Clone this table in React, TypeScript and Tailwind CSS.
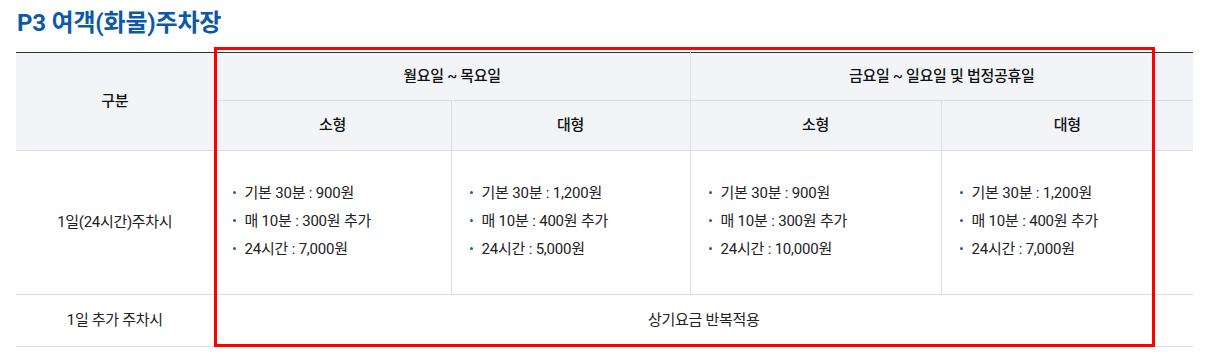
import React from 'react';

type Fee = { base: string; per10: string; day: string };

const fees: Fee[] = [
  { base: '900원', per10: '300원', day: '7,000원' },
  { base: '1,200원', per10: '400원', day: '5,000원' },
  { base: '900원', per10: '300원', day: '10,000원' },
  { base: '1,200원', per10: '400원', day: '7,000원' },
];

function FeeList({ fee }: { fee: Fee }) {
  const items = [`기본 30분 : ${fee.base}`, `매 10분 : ${fee.per10} 추가`, `24시간 : ${fee.day}`];
  return (
    <ul className="flex flex-col gap-[8px]">
      {items.map((t) => (
        <li key={t} className="flex items-center gap-[9px] leading-[20px] tracking-[-0.2px]">
          <span className="h-[3px] w-[3px] rounded-full bg-[#1a5fa8]" />
          <span>{t}</span>
        </li>
      ))}
    </ul>
  );
}

export default function App() {
  const th = 'border-b border-[#dcdde2] bg-[#f3f4f8] font-medium text-[15px] text-[#111] tracking-[-0.3px]';
  return (
    <div
      className="w-[1209px] h-[359px] bg-white px-[16px] pt-[7px] text-[#222]"
      style={{ fontFamily: 'Roboto, "Noto Sans CJK KR", sans-serif' }}
    >
      <h2 className="pl-[1px] text-[24px] font-bold leading-[32px] text-[#0c5aa3] tracking-[-0.2px]">
        P3 여객(화물)주차장
      </h2>

      <div className="relative mt-[13px] w-[1177px]">
        <table className="w-full table-fixed border-collapse border-t border-[#333] text-[15px]">
          <colgroup>
            <col className="w-[198px]" />
            <col className="w-[237px]" />
            <col className="w-[239px]" />
            <col className="w-[251px]" />
            <col className="w-[252px]" />
          </colgroup>
          <thead>
            <tr className="h-[48px]">
              <th rowSpan={2} className={th + ' border-r'}>
                구분
              </th>
              <th colSpan={2} className={th + ' border-r'}>
                월요일 ~ 목요일
              </th>
              <th colSpan={2} className={th}>
                금요일 ~ 일요일 및 법정공휴일
              </th>
            </tr>
            <tr className="h-[50px]">
              <th className={th + ' border-r'}>소형</th>
              <th className={th + ' border-r'}>대형</th>
              <th className={th + ' border-r'}>소형</th>
              <th className={th}>대형</th>
            </tr>
          </thead>
          <tbody>
            <tr className="h-[144px] border-b border-[#dcdde2]">
              <td className="border-r border-[#dcdde2] text-center tracking-[-0.3px]">1일(24시간)주차시</td>
              {fees.map((f, i) => (
                <td
                  key={i}
                  className={'pl-[18px] align-middle ' + (i < 3 ? 'border-r border-[#dcdde2]' : '')}
                >
                  <div className="-mt-[4px]">
                    <FeeList fee={f} />
                  </div>
                </td>
              ))}
            </tr>
            <tr className="h-[52px] border-b border-[#dcdde2]">
              <td className="border-r border-[#dcdde2] text-center tracking-[-0.3px]">1일 추가 주차시</td>
              <td colSpan={4} className="text-center tracking-[-0.3px]">
                상기요금 반복적용
              </td>
            </tr>
          </tbody>
        </table>

        {/* highlight box */}
        <div className="pointer-events-none absolute left-[198px] top-[-5px] h-[300px] w-[941px] border-[3px] border-[#ff0000]" />
      </div>
    </div>
  );
}
